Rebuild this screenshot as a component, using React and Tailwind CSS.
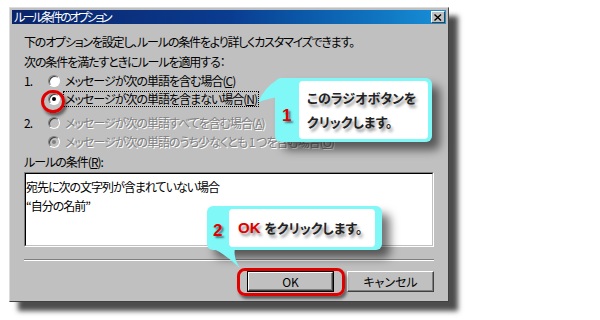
import React from "react";

const jp = "font-['MS_UI_Gothic','Noto_Sans_CJK_JP',sans-serif] [font-feature-settings:'palt']";
const dim = "text-[#808080] [text-shadow:1px_1px_0_#ffffff]";

const Radio = ({ checked, disabled }) => (
    <span
        className={`w-[12px] h-[12px] shrink-0 rounded-full border border-t-[#808080] border-l-[#808080] border-r-white border-b-white shadow-[inset_1px_1px_0_#404040] flex items-center justify-center ${disabled ? "bg-[#c0c0c0]" : "bg-white"}`}
    >
        {checked && <span className={`w-[4px] h-[4px] rounded-full ${disabled ? "bg-[#808080]" : "bg-black"}`} />}
    </span>
);

const Option = ({ num, checked, disabled, focus, children }) => (
    <div className="flex items-center h-[16px]">
        <span className="w-[24px]">{num}</span>
        <Radio checked={checked} disabled={disabled} />
        <span
            className={`ml-[3px] px-[1px] leading-[14px] border ${focus ? "border-dotted border-black" : "border-transparent"} ${disabled ? dim : ""}`}
        >
            {children}
        </span>
    </div>
);

const Button = ({ children, primary }) => (
    <div
        className={`w-[87px] h-[21px] flex items-center justify-center bg-[#c0c0c0] ${primary ? "border border-black" : ""}`}
    >
        <div className="w-full h-full flex items-center justify-center border border-t-white border-l-white border-r-[#404040] border-b-[#404040] shadow-[inset_-1px_-1px_0_#808080]">
            {children}
        </div>
    </div>
);

export default function App() {
    return (
        <div className={`relative w-[600px] h-[320px] bg-white overflow-hidden pl-[9px] pt-[7px] text-[12px] text-black ${jp}`}>
            {/* dialog */}
            <div className="w-[440px] h-[295px] flex flex-col bg-[#c0c0c0] border border-t-[#dcdcdc] border-l-[#dcdcdc] border-r-[#404040] border-b-[#404040] p-[2px] shadow-[9px_9px_5px_rgba(0,0,0,0.7)]">
                <div className="h-[14px] flex items-center justify-between pl-[2px] pr-[1px] bg-gradient-to-r from-[#0a246a] via-[#0a3c90] to-[#1890d8]">
                    <span className="text-white leading-[14px] tracking-[-2.4px]">ルール条件のオプション</span>
                    <span className="w-[14px] h-[12px] bg-[#c0c0c0] border border-t-white border-l-white border-r-[#404040] border-b-[#404040] flex items-center justify-center">
                        <svg width="8" height="7" viewBox="0 0 8 7">
                            <path d="M0.5 0.5 L7 6.5 M7 0.5 L0.5 6.5" stroke="black" strokeWidth="1.4" />
                        </svg>
                    </span>
                </div>

                <div className="flex flex-col px-[12px] tracking-[-1px]">
                    <div className="mt-[10px] h-[16px] leading-[16px] tracking-[-1.2px]">
                        下のオプションを設定し、ルールの条件をより詳しくカスタマイズできます。
                    </div>
                    <div className="mt-[4px] h-[16px] leading-[16px] tracking-[-1.1px]">次の条件を満たすときにルールを適用する：</div>
                    <div className="mt-[3px]">
                        <Option num="1.">メッセージが次の単語を含む場合(<u>C</u>)</Option>
                    </div>
                    <div className="mt-[2px]">
                        <Option checked focus>
                            メッセージが次の単語を含まない場合(<u>N</u>)
                        </Option>
                    </div>
                    <div className="mt-[8px]">
                        <Option num="2." disabled>
                            メッセージが次の単語すべてを含む場合(<u>A</u>)
                        </Option>
                    </div>
                    <div className="mt-[3px]">
                        <Option checked disabled>
                            メッセージが次の単語のうち少なくとも 1 つを含む場合(<u>O</u>)
                        </Option>
                    </div>
                    <div className="mt-[4px] h-[16px] leading-[16px]">
                        ルールの条件(<u>R</u>):
                    </div>
                    <div className="mt-[2px] h-[75px] bg-white border border-t-[#808080] border-l-[#808080] border-r-white border-b-white">
                        <div className="h-full border border-t-black border-l-black border-r-[#c0c0c0] border-b-[#c0c0c0] pt-[3px] leading-[19px] tracking-[-1px]">
                            <div>宛先に次の文字列が含まれていない場合</div>
                            <div>“自分の名前”</div>
                        </div>
                    </div>
                    <div className="mt-[12px] h-[2px] border-t border-t-[#808080] border-b border-b-white" />
                    <div className="mt-[10px] flex justify-end gap-[13px] tracking-normal">
                        <Button primary>OK</Button>
                        <Button>キャンセル</Button>
                    </div>
                </div>
            </div>

            {/* red circle on radio */}
            <div className="absolute left-[41px] top-[90px] w-[24px] h-[23px] rounded-full border-[3px] border-[#e00000] shadow-[2px_3px_3px_rgba(0,0,0,0.5)]" />

            {/* red frame on OK */}
            <div className="absolute left-[237px] top-[268px] w-[108px] h-[28px] rounded-[8px] border-[3px] border-[#e00000] shadow-[2px_3px_3px_rgba(0,0,0,0.5)]" />

            {/* callout 1 */}
            <div className="absolute left-[275px] top-[78px] w-[157px] h-[64px] rounded-[6px] bg-[#80f8f8] flex pl-[24px] pr-[4px] py-[3px] shadow-[8px_8px_10px_rgba(0,0,0,0.55)]">
                <svg className="absolute left-[-18px] top-[1px]" width="20" height="24" viewBox="0 0 20 24">
                    <path d="M20 1 Q8 8 1 23 Q10 20 20 18 Z" fill="#80f8f8" />
                </svg>
                <span className="absolute left-[7px] top-[25px] text-[17px] font-bold text-[#e00000] [text-shadow:2px_2px_2px_rgba(0,0,0,0.5)] font-['Liberation_Sans',sans-serif]">
                    1
                </span>
                <div className="flex-1 rounded-[4px] bg-white flex flex-col justify-center pl-[8px] text-[13px] font-bold leading-[24px] text-[#222] [text-shadow:2px_3px_3px_rgba(0,0,0,0.45)]">
                    <span>このラジオボタンを</span>
                    <span>クリックします。</span>
                </div>
            </div>

            {/* callout 2 */}
            <div className="absolute left-[207px] top-[206px] w-[175px] h-[44px] rounded-[6px] bg-[#80f8f8] flex pl-[22px] pr-[7px] py-[3px] shadow-[8px_8px_10px_rgba(0,0,0,0.55)]">
                <svg className="absolute left-[4px] top-[42px]" width="30" height="22" viewBox="0 0 30 22">
                    <path d="M1 0 Q14 6 29 20 Q22 10 24 0 Z" fill="#80f8f8" />
                </svg>
                <span className="absolute left-[6px] top-[12px] text-[17px] font-bold text-[#e00000] [text-shadow:2px_2px_2px_rgba(0,0,0,0.5)] font-['Liberation_Sans',sans-serif]">
                    2
                </span>
                <div className="flex-1 rounded-[4px] bg-white flex items-center pl-[9px] text-[13px] font-bold text-[#222] [text-shadow:2px_3px_3px_rgba(0,0,0,0.45)]">
                    <span className="text-[#e00000] font-['Liberation_Sans',sans-serif] text-[15px] mr-[4px]">OK</span>
                    <span>をクリックします。</span>
                </div>
            </div>
        </div>
    );
}
